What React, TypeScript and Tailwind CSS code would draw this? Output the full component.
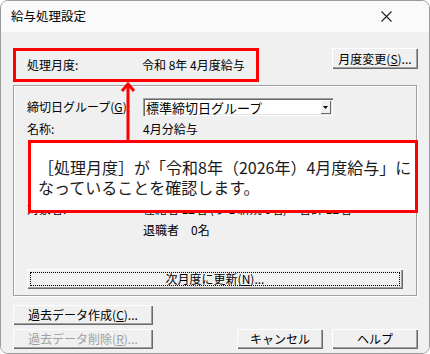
import React from "react";

const btn =
  "flex items-center justify-center bg-[#f0f0f0] shadow-[inset_1px_1px_0_#fff,inset_-1px_-1px_0_#696969,inset_-2px_-2px_0_#a0a0a0] text-[12px] leading-none";

type RowProps = { label: string; children?: React.ReactNode; className?: string };

function Row({ label, children, className = "h-[21px]" }: RowProps) {
  return (
    <div className={`flex items-center ${className}`}>
      <div className="w-[116px] shrink-0">{label}</div>
      <div>{children}</div>
    </div>
  );
}

export default function App() {
  return (
    <div className="relative flex h-[354px] w-[430px] flex-col overflow-hidden rounded-[8px] border border-[#9a9a9a] font-['Noto_Sans_CJK_JP',sans-serif] text-[12px] text-black">
      {/* title bar */}
      <div className="flex h-[31px] shrink-0 items-center justify-between bg-[#fafafa] pl-[10px] pr-[37px]">
        <span className="text-[12.5px] leading-none">給与処理設定</span>
        <svg width="11" height="11" viewBox="0 0 11 11">
          <path d="M0.5 0.5 L10.5 10.5 M10.5 0.5 L0.5 10.5" stroke="#222" strokeWidth="1.1" />
        </svg>
      </div>

      {/* body */}
      <div className="flex flex-1 flex-col bg-[#f0f0f0] pl-[12px] pr-[11px] pt-[16px]">
        <div className="flex items-start">
          <div className="flex h-[34px] w-[246px] items-center border-[3px] border-[#ff0000] pl-[11px]">
            <span className="w-[115px]">処理月度:</span>
            <span>令和 8年 4月度給与</span>
          </div>
          <button className={`${btn} ml-auto h-[21px] w-[86px]`}>
            月度変更(<u>S</u>)...
          </button>
        </div>

        {/* group panel */}
        <div className="mt-[3px] flex h-[211px] w-[404px] flex-col border border-[#a0a0a0] pl-[13px] pt-[12px] shadow-[inset_1px_1px_0_#fff,1px_1px_0_#fff]">
          <div className="flex h-[18px] items-center">
            <div className="w-[116px] shrink-0">
              締切日グループ(<u>G</u>):
            </div>
            <div className="flex h-[18px] w-[190px] items-center justify-between bg-white pl-[3px] pr-[2px] shadow-[inset_1px_1px_0_#a0a0a0,inset_2px_2px_0_#696969,inset_-1px_-1px_0_#fff,inset_-2px_-2px_0_#e3e3e3]">
              <span className="text-[13px] leading-none">標準締切日グループ</span>
              <span className="flex h-[14px] w-[11px] items-center justify-center bg-[#f0f0f0] shadow-[inset_1px_1px_0_#fff,inset_-1px_-1px_0_#696969]">
                <svg width="5" height="3" viewBox="0 0 5 3">
                  <path d="M0 0 H5 L2.5 3 Z" fill="#000" />
                </svg>
              </span>
            </div>
          </div>
          <div className="mt-[2px] flex flex-col">
            <Row label="名称:">4月分給与</Row>
            {/* rows hidden under the callout */}
            <div className="h-[59px]" />
            <Row label="対象者:">在籍者 12名 (うち新規 0名)　合計 12名</Row>
            <Row label="" className="h-[22px]">
              退職者　0名
            </Row>
          </div>
          <button className={`${btn} relative mt-[28px] h-[20px] w-[376px]`}>
            <span className="absolute inset-[3px] border border-dotted border-black" />
            次月度に更新(<u>N</u>)...
          </button>
        </div>

        {/* bottom buttons */}
        <div className="mt-[9px] flex flex-col gap-[4px]">
          <button className={`${btn} h-[20px] w-[140px]`}>
            過去データ作成(<u>C</u>)...
          </button>
          <div className="flex items-center">
            <button className={`${btn} h-[20px] w-[140px] text-[#a0a0a0]`}>
              過去データ削除(<u>R</u>)...
            </button>
            <div className="ml-auto flex gap-[9px]">
              <button className={`${btn} h-[20px] w-[86px]`}>キャンセル</button>
              <button className={`${btn} h-[20px] w-[86px]`}>ヘルプ</button>
            </div>
          </div>
        </div>
      </div>

      {/* annotation arrow */}
      <svg
        className="absolute left-[119px] top-[79px]"
        width="16"
        height="62"
        viewBox="0 0 16 62"
      >
        <path d="M8 4 V62" stroke="#ff0000" strokeWidth="3" />
        <path d="M2 11 L8 4 L14 11" stroke="#ff0000" strokeWidth="3" fill="none" />
      </svg>

      {/* annotation callout */}
      <div className="absolute left-[27px] top-[139px] h-[73px] w-[390px] border-[3px] border-[#ff0000] bg-white pl-[7px] pt-[14px] text-[16px] leading-[20px] text-[#1a1a1a]">
        ［処理月度］が「令和8年（2026年）4月度給与」に
        <br />
        なっていることを確認します。
      </div>
    </div>
  );
}
